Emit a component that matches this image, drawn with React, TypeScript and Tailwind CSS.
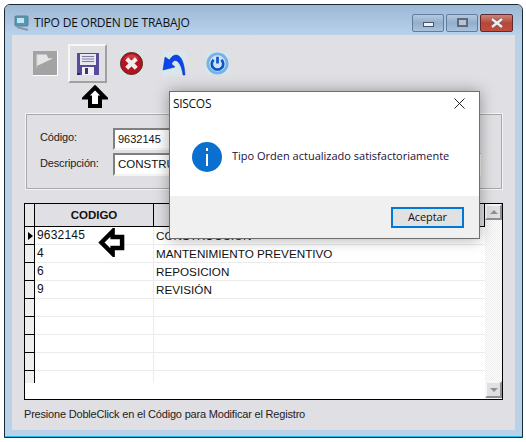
const sans = "font-['Liberation_Sans',Arial,sans-serif]"
const segoe = "font-['Open_Sans','Noto_Sans',sans-serif]"

const rows = [
  ['9632145', 'CONSTRUCCION'],
  ['4', 'MANTENIMIENTO PREVENTIVO'],
  ['6', 'REPOSICION'],
  ['9', 'REVISIÓN'],
  ['', ''],
  ['', ''],
  ['', ''],
  ['', ''],
  ['', ''],
]

function BlackArrow({ className }: { className: string }) {
  // block arrow drawn pointing up, rotated for the grid one
  return (
    <svg viewBox="0 0 26 24" className={className}>
      <path d="M13 3 L23 13 H18 V21.5 H8 V13 H3 Z" fill="#fff" stroke="#000" strokeWidth="4" strokeLinejoin="miter" />
    </svg>
  )
}

function WinButton({ kind }: { kind: 'min' | 'max' | 'close' }) {
  if (kind === 'close') {
    return (
      <div className="w-[33px] h-[18px] rounded-[2px] border border-[#5d2a2f] bg-gradient-to-b from-[#c98577] via-[#b5463a] to-[#c04e3f] flex items-center justify-center">
        <svg viewBox="0 0 14 10" className="w-[14px] h-[10px]">
          <path d="M2 1 L12 9 M12 1 L2 9" stroke="#6a5a5a" strokeWidth="3.6" />
          <path d="M2 1 L12 9 M12 1 L2 9" stroke="#eeeeee" strokeWidth="2.4" />
        </svg>
      </div>
    )
  }
  return (
    <div className="w-[32px] h-[18px] rounded-[2px] border border-[#5f7d9c] bg-gradient-to-b from-[#b3c9df] via-[#93aecb] to-[#a9c3de] flex items-center justify-center">
      {kind === 'min' ? (
        <div className="w-[11px] h-[5px] mt-[3px] border border-[#44546a] bg-[#f0f0f0]" />
      ) : (
        <div className="w-[11px] h-[9px] border-2 border-[#5a6a80] bg-[#b8c4d0]" />
      )}
    </div>
  )
}

function ToolbarIcons() {
  return (
    <div className="flex items-center pl-[21px] pt-[9px] h-[48px]">
      <div className="w-[25px] h-[25px] bg-[#a3a3a3] border-r border-b border-white flex items-start">
        <svg viewBox="0 0 25 25" className="w-[25px] h-[25px]">
          <path d="M4 3 H14 L16 7 H21 L4 15 Z" fill="#e6e6e6" />
          <path d="M4 3 V17" stroke="#c8c8c8" strokeWidth="1" />
        </svg>
      </div>
      <div className="ml-[10px] w-[39px] h-[39px] border-2 border-t-[#f6f6f6] border-l-[#f6f6f6] border-r-[#a0a0a0] border-b-[#a0a0a0] flex items-center justify-center">
        <svg viewBox="0 0 22 22" className="w-[22px] h-[22px]">
          <rect x="0" y="0" width="22" height="22" fill="#5a4a9a" />
          <rect x="3" y="1" width="16" height="11" fill="#e8e8f0" />
          <path d="M5 3.5 H17 M5 6 H17 M5 8.5 H17" stroke="#7a7aa0" strokeWidth="1" />
          <rect x="5" y="14" width="12" height="8" fill="#f0f0f5" />
          <rect x="8" y="15" width="3" height="6" fill="#3a3a6a" />
          <rect x="0" y="20" width="3" height="2" fill="#2e2860" />
        </svg>
      </div>
      <div className="ml-[13px] w-[23px] h-[23px] bg-[#d8e6e6] flex items-center justify-center">
        <svg viewBox="0 0 24 24" className="w-[23px] h-[23px]">
          <circle cx="12" cy="12" r="11.5" fill="#b3141f" stroke="#5a2020" strokeWidth="1" />
          <path d="M4 7 A9.5 9.5 0 0 1 20 7 Z" fill="#d9545a" opacity="0.6" />
          <path d="M7 7 L17 17 M17 7 L7 17" stroke="#f2ecec" strokeWidth="4.4" />
        </svg>
      </div>
      <div className="ml-[19px] w-[24px] h-[24px] bg-[#d8e8ea] flex items-center justify-center">
        <svg viewBox="0 0 24 24" className="w-[24px] h-[24px]">
          <path d="M23 23 C22.5 11 19 3 14 3 C11 3 8.5 6 7.5 8 L3 5 L1 18 L13 15 L9.5 12 C10.5 9.5 12.5 7.5 15 9 C18 11 20 16 21 23 Z" fill="#0a44ee" stroke="#0a2c9a" strokeWidth="0.5" />
        </svg>
      </div>
      <div className="ml-[20px] w-[23px] h-[23px] bg-[#d8e6ea] flex items-center justify-center">
        <svg viewBox="0 0 24 24" className="w-[23px] h-[23px]">
          <circle cx="12" cy="12" r="11.5" fill="#74b2ea" />
          <circle cx="12" cy="12" r="8.5" fill="#cfe4f8" />
          <path d="M8 8 A6 6 0 1 0 16 8" fill="none" stroke="#0f55c8" strokeWidth="2.8" />
          <path d="M12 5 V12" stroke="#0f55c8" strokeWidth="2.8" />
        </svg>
      </div>
    </div>
  )
}

export default function App() {
  return (
    <div className={`relative w-[526px] h-[442px] bg-white overflow-hidden ${sans}`}>
      <div className="absolute left-[4px] top-[4px] w-[519px] h-[434px] border border-[#1a2a33] rounded-t-[6px] bg-[#b9d2ea] flex flex-col">
        {/* title bar */}
        <div className="h-[30px] shrink-0 rounded-t-[5px] bg-gradient-to-b from-[#9cb8d5] to-[#b9d2ec] flex items-center pl-[9px] pr-[9px] pt-[5px]">
          <svg viewBox="0 0 16 16" className="w-[16px] h-[16px]">
            <rect x="1" y="1" width="13" height="10" rx="1" fill="#4c9ab8" stroke="#6a7a88" strokeWidth="1" />
            <path d="M3 12 L14 15" stroke="#8a96a0" strokeWidth="2" />
            <rect x="3" y="3" width="7" height="5" fill="#c6e4ee" />
          </svg>
          <span className={`ml-[4px] mt-[1px] text-[12px] text-[#111] tracking-[-0.2px] ${segoe}`}>TIPO DE ORDEN DE TRABAJO</span>
          <div className="ml-auto flex gap-[2px]">
            <WinButton kind="min" />
            <WinButton kind="max" />
            <WinButton kind="close" />
          </div>
        </div>

        {/* window body */}
        <div className="mx-[7px] h-[395px] bg-[#e0dfe3] flex flex-col">
          <ToolbarIcons />

          <div className="ml-[13px] mt-[30px] w-[478px] h-[77px] border border-[#f4f4f4] outline outline-1 outline-[#a8a8a8] outline-offset-[-2px] flex flex-col pl-[14px] pt-[14px] gap-[3px]">
            <div className="flex items-center h-[22px]">
              <span className="w-[73px] text-[11px] tracking-[-0.15px] text-[#222] -mt-[3px]">Código:</span>
              <div className="w-[200px] h-[22px] bg-white border-2 border-t-[#808080] border-l-[#808080] border-r-[#f4f4f4] border-b-[#f4f4f4] flex items-center pl-[3px] text-[11px] text-[#111]">9632145</div>
            </div>
            <div className="flex items-center h-[23px]">
              <span className="w-[73px] text-[11px] tracking-[-0.15px] text-[#222] -mt-[3px]">Descripción:</span>
              <div className="w-[368px] h-[23px] bg-white border-2 border-t-[#808080] border-l-[#808080] border-r-[#f4f4f4] border-b-[#f4f4f4] flex items-center pl-[3px] text-[11.5px] text-[#111]">CONSTRUCCION</div>
            </div>
          </div>

          {/* grid */}
          <div className="ml-[12px] mt-[13px] w-[479px] h-[197px] border border-black flex overflow-hidden bg-white">
            <div className="flex-1 flex flex-col min-w-0">
              <div className="h-[23px] shrink-0 flex bg-[#e0dfe3] border-b border-black">
                <div className="w-[10px] border-r border-black bg-[#e8e8e8]" />
                <div className="w-[119px] border-r border-black flex items-center justify-center pt-[2px] text-[11.5px] font-bold text-[#111]">CODIGO</div>
                <div className="flex-1 border-r border-black flex items-center justify-center pt-[2px] text-[11.5px] font-bold text-[#111]">DESCRIPCION</div>
              </div>
              {rows.map((r, i) => (
                <div key={i} className={`${i === 8 ? 'h-[12px]' : 'h-[18px]'} shrink-0 flex`}>
                  <div className={`w-[10px] border-r border-black bg-[#efefef] flex items-center justify-end ${i === 8 ? '' : 'border-b'}`}>
                    {i === 0 && <div className="w-0 h-0 border-y-[4px] border-y-transparent border-l-[5px] border-l-black mr-[1px]" />}
                  </div>
                  <div className={`w-[119px] border-r border-[#ebebeb] pl-[2px] text-[12px] leading-[17px] tracking-[0.2px] text-[#111] ${i === 8 ? '' : 'border-b border-b-[#ebebeb]'}`}>{r[0]}</div>
                  <div className={`flex-1 pl-[2px] text-[11.7px] leading-[17px] text-[#111] ${i === 8 ? '' : 'border-b border-b-[#ebebeb]'}`}>{r[1]}</div>
                </div>
              ))}
            </div>
            <div className="w-[17px] shrink-0 flex flex-col justify-between pb-[1px] bg-[repeating-conic-gradient(#ececec_0_25%,#ffffff_0_50%)] bg-[length:2px_2px]">
              <div className="h-[16px] bg-[#e0dfe3] border-2 border-t-[#f6f6f6] border-l-[#f6f6f6] border-r-[#909090] border-b-[#909090] flex items-center justify-center">
                <div className="w-0 h-0 border-x-[4px] border-x-transparent border-b-[4px] border-b-[#909090]" />
              </div>
              <div className="h-[17px] bg-[#e0dfe3] border-2 border-t-[#f6f6f6] border-l-[#f6f6f6] border-r-[#909090] border-b-[#909090] flex items-center justify-center">
                <div className="w-0 h-0 border-x-[4px] border-x-transparent border-t-[4px] border-t-[#909090]" />
              </div>
            </div>
          </div>

          <div className="ml-[12px] mt-[6px] text-[11px] tracking-[-0.19px] text-[#222]">Presione DobleClick en el Código para Modificar el Registro</div>
        </div>
        <div className="mt-auto h-[1px] bg-[#20c0e8]" />
      </div>

      {/* annotations over the capture */}
      <BlackArrow className="absolute left-[82px] top-[84px] w-[26px] h-[25px]" />
      <BlackArrow className="absolute left-[97px] top-[228px] w-[29px] h-[29px] -rotate-90" />

      {/* message box */}
      <div className={`absolute left-[169px] top-[91px] w-[311px] h-[148px] bg-white border border-[#6e6e6e] shadow-[0_0_14px_rgba(0,0,0,0.35)] flex flex-col ${segoe}`}>
        <div className="h-[22px] shrink-0 flex items-center justify-between pl-[3px] pr-[14px] pt-[1px]">
          <span className="text-[12px] tracking-[-0.3px] text-[#111]">SISCOS</span>
          <svg viewBox="0 0 12 12" className="w-[11px] h-[11px]">
            <path d="M0.5 0.5 L11.5 11.5 M11.5 0.5 L0.5 11.5" stroke="#111" strokeWidth="1" />
          </svg>
        </div>
        <div className="flex-1 flex items-center pl-[22px] pt-[3px]">
          <svg viewBox="0 0 30 30" className="w-[30px] h-[30px] shrink-0">
            <circle cx="15" cy="15" r="15" fill="#0a6fcf" />
            <rect x="14" y="6" width="2" height="3" fill="#fff" />
            <rect x="14" y="12" width="2" height="12" fill="#fff" />
          </svg>
          <span className="ml-[10px] text-[11px] text-[#1c0f3a]">Tipo Orden actualizado satisfactoriamente</span>
        </div>
        <div className="h-[42px] shrink-0 bg-[#f0f0f0] flex items-start justify-end pr-[15px] pt-[11px]">
          <div className="w-[73px] h-[21px] bg-[#e1e1e1] border-2 border-[#0078d7] flex items-center justify-center text-[11px] tracking-[-0.1px] text-[#111]">Aceptar</div>
        </div>
      </div>
    </div>
  )
}
